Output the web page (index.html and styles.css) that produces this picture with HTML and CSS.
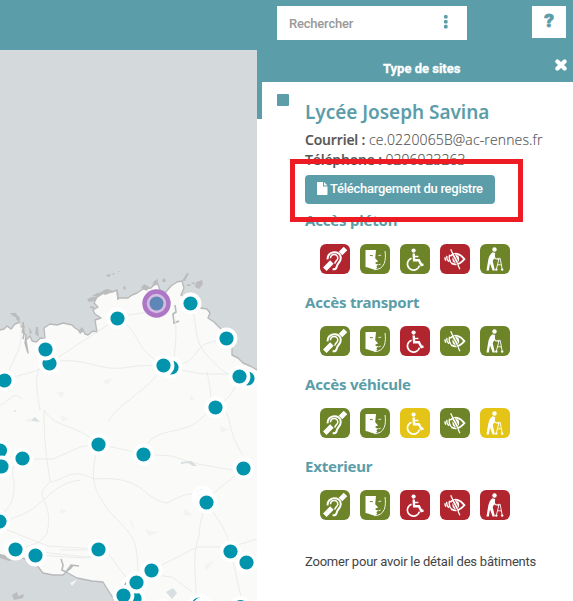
FILE: index.html
```
<!DOCTYPE html>
<html lang="fr">
<head>
<meta charset="utf-8">
<title>Accessibilité des sites</title>
<link rel="stylesheet" href="styles.css">
</head>
<body>
<svg class="sprites" aria-hidden="true">
  <symbol id="ear" viewBox="0 0 30 30">
    <g fill="none" stroke="#fff">
      <path stroke-width="5" d="M4.800 25.200 11.900 18.100M20.500 9.500 25.500 4.500"/>
      <path stroke-width="2" d="M7.600 15.400C6.800 6.500 20.800 5.800 20.800 14c0 4.500-3.600 5-4 8.300-.4 2.600-2.200 3.200-4.200 3"/>
      <path stroke-width="1.500" d="M10.500 14.300c.3-5.200 7.500-4.800 7.300 0-.2 2.600-3.300 2.800-2.800 5.400"/>
    </g>
  </symbol>
  <symbol id="face" viewBox="0 0 30 30">
    <path fill="#fff" d="M5.500 6H16l-.8 8.200 3 3.200-2.800 1 .4 1.700 3 .3-2.400 1.500.8 2.200-2.700 1.300c-3.500-.4-5.500-1.700-9-2.400z"/>
    <path fill="none" stroke="#fff" stroke-width=".9" d="M25 7c1.200 8 .4 18.800-11 18.700"/>
    <path fill="none" stroke="#fff" stroke-width=".8" d="m18.400 11.500 2.800-.3M18.700 20.800l2-.7"/>
    <path fill="none" stroke="currentColor" stroke-width="1" d="m10 11.500 2.800.2"/>
  </symbol>
  <symbol id="wheelchair" viewBox="0 0 30 30">
    <circle cx="13.600" cy="6.600" r="2.100" fill="#fff"/>
    <g fill="none" stroke="#fff">
      <path stroke-width="2.400" d="M13.700 9.500 14.100 16.200H18.900L21.400 21.100 23.500 20.300"/>
      <path stroke-width="1.600" d="M14 12.500h4.400M11.600 14.200a6.100 6.100 0 1 0 7.800 7.400"/>
    </g>
  </symbol>
  <symbol id="eye" viewBox="0 0 30 30">
    <g fill="none" stroke="#fff">
      <path stroke-width="1.800" d="M10.200 12.100c4.500-4 9.500-2.800 14.200 3-4.500 5.200-8.400 6.800-12.600 4.200"/>
      <path stroke-width="1.400" d="M6.800 11.800c-.4 2.100.4 4.200 2 6M9.600 10.800c-1 3.200 0 6.700 2.700 9.100M5 13.200c-.1 1.500.3 2.500.8 3.500"/>
      <path stroke-width="1.300" d="m10.700 5.300 9.200 20"/>
    </g>
    <ellipse cx="15.800" cy="15.100" rx="3.400" ry="4" fill="#fff"/>
    <path fill="none" stroke="currentColor" stroke-width=".8" d="m12.800 12.600 4.700 9M14.100 9.800l4.200 8"/>
  </symbol>
  <symbol id="walker" viewBox="0 0 30 30">
    <circle cx="14.500" cy="5.500" r="2.200" fill="#fff"/>
    <path fill="#fff" d="M12.400 8.200 15.200 9l-.7 5-1.800 3 2.200 9.400h-2.300L10 19.500l-1.200 6.900H6.500l1.600-9.700c.5-3.500 2-6.700 4.300-8.500z"/>
    <g fill="none" stroke="#fff">
      <path stroke-width="1.200" d="m13.800 11.200 1.300 3.300 4 1"/>
      <path stroke-width=".9" d="M17.500 14.400h2.700l2 11M18.900 15.200l-2.600 10.200M17.500 20.800h3.800"/>
    </g>
    <circle cx="16.300" cy="25.600" r="1.200" fill="#fff"/><circle cx="22.200" cy="25.600" r="1.200" fill="#fff"/>
  </symbol>
</svg>

<header class="topbar">
  <div class="search"><span>Rechercher</span>
    <svg width="4" height="14" viewBox="0 0 4 14"><rect width="3.600" height="3.600" rx="1.200"/><rect y="4.900" width="3.600" height="3.600" rx="1.200"/><rect y="9.800" width="3.600" height="3.600" rx="1.200"/></svg>
  </div>
  <div class="help">?</div>
</header>

<main class="main">
  <svg class="map" width="257" height="551" viewBox="0 50 257 551">
    <path class="land" d="M-3 330 0 330 4 329 7 326 11 329 15 324 20 322 21 327 24 326 22 332 26 335 25 343 28 353 26 340 30 336 32 341 37 342 40 338 45 339 44 328 50 324 57 325 63 323 72 325 75 328 80 331 82 328 85 334 88 335 93 331 97 332 95 320 101 318 95 314 93 310 98 307 94 303 97 297 104 293 107 290 112 292 117 290 118 298 128 298 132 295 137 293 143 289 151 288 157 282 160 290 165 293 171 286 177 282 182 281 184 288 181 295 188 300 200 308 207 309 210 313 208 318 214 322 220 328 227 335 232 345 232 355 238 358 243 363 250 366 261 372V605H115L113 597 111 595 103 582 92 581 77 578 66 572 63 575 53 575 43 573 35 563 20 557 10 560 0 555-3 555z"/>
    <g class="shore">
      <path d="m87 299 5-2 6 0-3 4-6 1zM92 296l5-3 6-1-4 5zM101 292l5-3 5 1 2 2-8 3zM141 288l3-4 5 3-2 4zM195 287l1-5 6-2 1 4-4 5zM191 283l3-1 1 3zM152 286l2-5 4-2-1 6zM162 280l3-2 1 4-3 0zM106 276l2-2 3 1-2 2zM112 274l2-1 1 1-2 1zM118 272l2-1 0 1zM123 287l2-1 1 3-2 1zM182 281l5-8 2 0-4 8zM186 285l4-1 1 2-4 0zM10 313l6 0 2 5-5-2zM17 315l3 3-1 4-3-3zM29 327l3 5-2 3zM36 327l2 0 1 10-4-3zM78 331l5-2 1 2-4 3zM12 595l5-3 1 4 6-2-1 4-9 2zM0 554l5 1 5 6-4-1-6-2zM90 306l5 1-1 2-4-1z"/>
      <path class="line" d="m175 305 1 7-3 2 1 9 5-2M61 559l2 6-1 5 4 2 5-7 8 1M66 572l5-4 2-3M23 322l1 12-1 5M117 290l1 10"/>
    </g>
    <path class="roads" d="M0 383c15-9 25-7 40-14M49 362c40-6 50 11 80 5 30-5 48 4 75 7h53M117 318c20-7 30-1 40-14M117 318c18 9 20 25 29 34l17 15M117 319 51 362M163 367c-16 25-45 36-55 55M163 367c35-2 30-16 42-23l21-6M190 304c8 16 3 36 15 49 15 16 20 22 34 24M175 319c3 18-2 38-1 48M239 377c-7 20-12 22-24 30M207 372c6 25 2 36 8 35s11 2 14 12c2 14 8 28 14 36M243 469l-27 22-10 10c-4 18-6 19-7 35-8 20-2 46-3 65M22 459h31l27-12 19-3 44 10 28 2 27 8 34 6 10 6M98 444c-9 39-4 44 10 66 28 30 29 26 30 68M98 444c-24-22-41-14-54-34 0 43 5 60 6 72-20 18 5 14-3 52l-9 9-23 7M50 482c18-3 20-15 44-3 52-4 47 20 73 24 30-16 25-7 49 0M0 521c46-7 46-38 81-41M0 527l48 19 50 3M35 555l50 3 20-9 34 46M152 570l45-23h34l26-8M207 503l14 21c12 20 8 28 12 38l9 39M22 459c-20 12 0 20-12 46L0 517M40 410c-8-45 1-35 0-49M20 322c6 30-10 35-14 60M143 454c7-25 26-19 50-29l22-18M22 399c-8-10-15 5-22 6M60 550l48 0M40 552l55 6M146 574l26 3 20 15"/>
    <path class="patches" d="m56 393 9-2-3 7zM103 381l10-3-6 7zM60 415l8 3-5 4zM190 395l5 4-5 2zM220 426l10 4-9 2zM61 508l6 4-7 1zM130 517l5 12-4-5zM185 509l8 7-10-1zM145 530l14 2-10 4zM205 565l9-4-8 10zM70 583l8-4-6 7zM25 421l5-3 2 4z"/>
    <path class="lake" d="m31 420 4-3 5 5-7-1zM13 411l3-1 0 2zM181 462l10-1 6 5-4 0-5-3-7 1zM166 592l7-4 4 5-5 6zM103 568l2 9"/>
    <g class="pins">
      <circle cx="190.500" cy="303.500" r="9"/><circle cx="117.500" cy="318.500" r="9"/><circle cx="226.500" cy="338.500" r="9"/>
      <circle cx="49.500" cy="363.500" r="9"/><circle cx="45.500" cy="349.500" r="9"/><circle cx="4.500" cy="380.500" r="9"/>
      <circle cx="171.500" cy="367.500" r="9"/><circle cx="163.500" cy="365.500" r="9"/><circle cx="247.500" cy="378.500" r="9"/><circle cx="239.500" cy="376.500" r="9"/>
      <circle cx="215.500" cy="407.500" r="9"/><circle cx="98.500" cy="444.500" r="9"/><circle cx="143.500" cy="454.500" r="9"/>
      <circle cx="0" cy="450.500" r="9"/><circle cx="1.500" cy="466.500" r="9"/><circle cx="22.500" cy="458.500" r="9"/><circle cx="243.500" cy="468.500" r="9"/>
      <circle cx="202.500" cy="496.500" r="9"/><circle cx="204" cy="500" r="9"/><circle cx="206.500" cy="502.500" r="9"/><circle cx="-.5" cy="521.500" r="9"/>
      <circle cx="15.500" cy="549.500" r="9"/><circle cx="35.500" cy="555.500" r="9"/><circle cx="98.500" cy="549.500" r="9"/><circle cx="230.500" cy="551.500" r="9"/><circle cx="246.500" cy="562.500" r="9"/>
      <circle cx="151.500" cy="570.500" r="9"/><circle cx="131" cy="587" r="9"/><circle cx="134.500" cy="598.500" r="9"/><circle cx="136.500" cy="582.500" r="9"/><circle cx="123.500" cy="595.500" r="9"/>
      <circle cx="199" cy="604.500" r="9"/><circle cx="203" cy="608" r="9"/><circle cx="240.500" cy="607" r="9"/><circle cx="163" cy="610" r="9"/>
    </g>
    <circle cx="156.500" cy="303.500" r="14.200" fill="#ad77c6"/><circle cx="156.500" cy="303.500" r="9.700" fill="#d5bce2"/><circle cx="156.500" cy="303.500" r="7" fill="#5e87b7"/>
  </svg>

  <aside class="side">
    <div class="side-head"><span>Type de sites</span>
      <svg class="close" width="12" height="12" viewBox="0 0 12 12"><path d="m2.400 2.400 7.200 7.200m0-7.200-7.200 7.200"/></svg>
    </div>
    <div class="side-body">
      <div class="edge"></div>
      <div class="swatch"></div>
      <section class="site">
        <h1>Lycée Joseph Savina</h1>
        <p class="info"><b>Courriel :</b> <span class="mail">ce.0220065B@ac-rennes.fr</span></p>
        <p class="info"><b>Téléphone :</b> 0296923263</p>
        <div class="download">
          <svg width="11" height="13" viewBox="0 0 11 13"><path d="M.8 0H6v4.500h4.500v7.700q0 .8-.8.800H.8q-.8 0-.8-.8V.8Q0 0 .8 0zM7 0l3.500 3.500H7z"/></svg><span>Téléchargement du registre</span>
        </div>
        <h2 class="h-foot">Accès piéton</h2>
        <div class="icons">
          <svg class="red"><use href="#ear"/></svg><svg class="green"><use href="#face"/></svg><svg class="green"><use href="#wheelchair"/></svg><svg class="red"><use href="#eye"/></svg><svg class="green"><use href="#walker"/></svg>
        </div>
        <h2>Accès transport</h2>
        <div class="icons">
          <svg class="green"><use href="#ear"/></svg><svg class="green"><use href="#face"/></svg><svg class="red"><use href="#wheelchair"/></svg><svg class="green"><use href="#eye"/></svg><svg class="green"><use href="#walker"/></svg>
        </div>
        <h2>Accès véhicule</h2>
        <div class="icons">
          <svg class="green"><use href="#ear"/></svg><svg class="green"><use href="#face"/></svg><svg class="yellow"><use href="#wheelchair"/></svg><svg class="green"><use href="#eye"/></svg><svg class="yellow"><use href="#walker"/></svg>
        </div>
        <h2>Exterieur</h2>
        <div class="icons">
          <svg class="green"><use href="#ear"/></svg><svg class="green"><use href="#face"/></svg><svg class="red"><use href="#wheelchair"/></svg><svg class="red"><use href="#eye"/></svg><svg class="red"><use href="#walker"/></svg>
        </div>
        <p class="note">Zoomer pour avoir le détail des bâtiments</p>
      </section>
    </div>
  </aside>
</main>
<div class="highlight"></div>
</body>
</html>
```

FILE: styles.css
```
* { box-sizing: border-box; }
body { margin: 0; width: 573px; height: 601px; overflow: hidden; position: relative; background: #fff; font-family: Roboto, "Liberation Sans", sans-serif; }
h1, h2, p { margin: 0; white-space: nowrap; }
svg { display: block; flex: none; }
.sprites { position: absolute; width: 0; height: 0; }

.topbar { height: 50px; padding: 6px 7px 0 277px; display: flex; justify-content: space-between; align-items: flex-start; background: #5b9da8; }
.search { width: 190px; height: 34px; padding: 0 19px 0 12px; display: flex; align-items: center; justify-content: space-between; background: #fff; color: #999; font-size: 13px; font-weight: 500; letter-spacing: -.2px; }
.search svg { fill: #5b9da8; margin-top: -3px; }
.help { width: 34px; height: 32px; background: #fff; color: #5b9da8; font: 900 19px/30px Roboto, sans-serif; text-align: center; -webkit-text-stroke: .8px #5b9da8; }

.main { display: flex; height: 551px; }
.map { background: #d4d9dc; }
.land { fill: #fafaf8; stroke: #b8b9ba; stroke-width: 1.4; stroke-linejoin: round; }
.shore { fill: #bbbcbd; }
.line { fill: none; stroke: #b8b9ba; stroke-width: 1.6; }
.roads { fill: none; stroke: #e9eae9; stroke-width: .9; }
.patches { fill: #f2f4f2; }
.lake { fill: #d9dfe1; }
.pins { fill: #0095ad; stroke: #fff; stroke-width: 3.8; }

.side { width: 316px; }
.side-head { height: 32px; padding: 0 6px 0 126px; display: flex; justify-content: space-between; background: #5b9da8; color: #fff; font-size: 13px; line-height: 37px; font-weight: 700; -webkit-text-stroke: .3px #fff; }
.close { margin-top: 9px; fill: none; stroke: #fff; stroke-width: 4.2; stroke-linecap: round; }
.side-body { display: flex; align-items: flex-start; }
.edge { width: 5px; height: 37px; background: #5b9da8; }
.swatch { width: 12px; height: 12px; margin: 12px 16px 0 15px; border-radius: 1px; background: #5b9da8; }
.site { padding-top: 18px; }
h1 { height: 30px; color: #5b9da8; font: 600 19px/25px "Noto Sans", "Open Sans", sans-serif; letter-spacing: -.04px; }
.info { height: 20px; color: #555; font: 300 14px/20px "Open Sans", sans-serif; -webkit-text-stroke: .15px #555; }
.info b { font-weight: 600; letter-spacing: -.15px; }
.mail { letter-spacing: .14px; }
.download { width: 190px; height: 29px; margin-top: 5px; padding: 0 12px; display: flex; align-items: center; gap: 2px; border-radius: 4px; background: #5b9da8; color: #fff; font-size: 13px; font-weight: 500; letter-spacing: -.27px; white-space: nowrap; }
.download svg { fill: #fff; margin-top: -2px; }
.download span { margin-top: -2px; }
h2 { height: 52px; padding-top: 17px; color: #5b9da8; font: 700 15px/22px "Noto Sans", "Open Sans", sans-serif; letter-spacing: -.22px; }
.h-foot { height: 40px; padding-top: 5px; }
.icons { display: flex; gap: 10px; padding-left: 15px; }
.icons svg { width: 30px; height: 30px; border-radius: 6px; }
.red { background: #b1252f; color: #b1252f; }
.green { background: #6d8428; color: #6d8428; }
.yellow { background: #e4c416; color: #e4c416; }
.note { margin-top: 32px; color: #444; font-size: 13px; line-height: 20px; letter-spacing: -.22px; }
.highlight { position: absolute; left: 290px; top: 159px; width: 233px; height: 63px; border: 5px solid #ed1c24; }
```
